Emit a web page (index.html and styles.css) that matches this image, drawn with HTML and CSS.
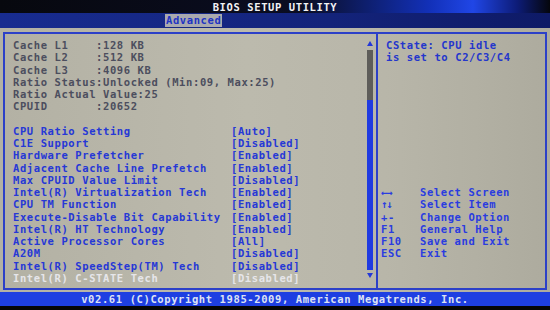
FILE: index.html
```html
<!DOCTYPE html>
<html lang="en">
<head>
  <meta charset="UTF-8">
  <title>BIOS Setup Utility</title>
  <link rel="stylesheet" href="styles.css">
</head>
<body>
  <div class="titlebar">BIOS SETUP UTILITY</div>
  <div class="tabbar"><span class="tab">Advanced</span></div>

  <div class="screen">
    <div class="frame">
      <!-- left: settings list -->
      <div class="left">
        <div class="list">
          <div class="info">Cache L1    :128 KB</div>
          <div class="info">Cache L2    :512 KB</div>
          <div class="info">Cache L3    :4096 KB</div>
          <div class="info">Ratio Status:Unlocked (Min:09, Max:25)</div>
          <div class="info">Ratio Actual Value:25</div>
          <div class="info">CPUID       :20652</div>
          <div class="blank"></div>
          <div class="row"><span>CPU Ratio Setting</span><span>[Auto]</span></div>
          <div class="row"><span>C1E Support</span><span>[Disabled]</span></div>
          <div class="row"><span>Hardware Prefetcher</span><span>[Enabled]</span></div>
          <div class="row"><span>Adjacent Cache Line Prefetch</span><span>[Enabled]</span></div>
          <div class="row"><span>Max CPUID Value Limit</span><span>[Disabled]</span></div>
          <div class="row"><span>Intel(R) Virtualization Tech</span><span>[Enabled]</span></div>
          <div class="row"><span>CPU TM Function</span><span>[Enabled]</span></div>
          <div class="row"><span>Execute-Disable Bit Capability</span><span>[Enabled]</span></div>
          <div class="row"><span>Intel(R) HT Technology</span><span>[Enabled]</span></div>
          <div class="row"><span>Active Processor Cores</span><span>[All]</span></div>
          <div class="row"><span>A20M</span><span>[Disabled]</span></div>
          <div class="row"><span>Intel(R) SpeedStep(TM) Tech</span><span>[Disabled]</span></div>
          <div class="row current"><span>Intel(R) C-STATE Tech</span><span>[Disabled]</span></div>
        </div>
        <div class="scroll">
          <div class="arrow up"></div>
          <div class="track"></div>
          <div class="thumb"></div>
          <div class="arrow down"></div>
        </div>
      </div>

      <!-- right: help + keys -->
      <div class="right">
        <div class="help">CState: CPU idle<br>is set to C2/C3/C4</div>
        <div class="keys">
          <span class="arrows">&larr;&rarr;</span><span>Select Screen</span>
          <span class="arrows">&uarr;&darr;</span><span>Select Item</span>
          <span>+-</span><span>Change Option</span>
          <span>F1</span><span>General Help</span>
          <span>F10</span><span>Save and Exit</span>
          <span>ESC</span><span>Exit</span>
        </div>
      </div>
    </div>
  </div>

  <div class="footer">v02.61 (C)Copyright 1985-2009, American Megatrends, Inc.</div>
</body>
</html>
```

FILE: styles.css
```css
/* ─── base ─── */
* { box-sizing: border-box; margin: 0; padding: 0; }
html, body { width: 550px; height: 310px; overflow: hidden; }
body {
  background: #050608;
  font-family: "DejaVu Sans Mono", "Liberation Mono", monospace;
  font-weight: bold;
  font-size: 10.5px;
  letter-spacing: 0.6px;
  line-height: 12.25px;
}

/* ─── top bars ─── */
.titlebar {
  height: 13px; line-height: 14px;
  text-align: center; color: #f2f2f4;
  background: linear-gradient(90deg, #07080e 0%, #0a0d22 55%, #1230b8 78%, #2046e6 86%, #0d1c78 94%, #05060c 100%);
}
.tabbar {
  height: 15px;
  padding: 1px 0 0 165px;
  background: linear-gradient(90deg, #182c90 0%, #13237a 60%, #0e1a66 100%);
}
.tab {
  display: inline-block;
  height: 13px; line-height: 13px;
  padding: 0 1px;
  background: #a9a9ae; color: #1e34c4;
}

/* ─── main frame ─── */
.screen {
  height: 264px;
  padding: 4px 3px 2px 3px;
  background: linear-gradient(90deg, #b3b1a4 0%, #bcbaad 45%, #b8b6a9 70%, #adab9e 100%);
}
.frame {
  height: 258px;
  display: flex;
  border: 2px solid #2c40c8;
}
.left {
  width: 373px;
  display: flex;
  border-right: 2px solid #2c40c8;
  padding: 5px 3px 0 8px;
}
.list { flex: 1; }
.info { color: #4c4e5e; white-space: pre; height: 12.25px; }
.blank { height: 12.25px; }
.row {
  display: grid; grid-template-columns: 218px auto;
  color: #2638d6; white-space: pre; height: 12.25px;
}
.row.current { color: #e6e6ea; }

/* scrollbar */
.scroll { width: 6px; display: flex; flex-direction: column; align-items: center; }
.arrow { width: 0; height: 0; border-left: 3px solid transparent; border-right: 3px solid transparent; }
.arrow.up { border-bottom: 5px solid #2438d8; margin: 2px 0 4px; }
.arrow.down { border-top: 5px solid #2438d8; margin-top: 3px; }
.track { width: 6px; height: 50px; background: #5e5d5a; }
.thumb { width: 6px; height: 170px; background: #1f3ae0; }

/* help panel */
.right { flex: 1; padding: 5px 0 0 3px; color: #2436cc; }
.help { padding-left: 5px; white-space: pre; }
.keys {
  display: grid; grid-template-columns: 39px auto;
  margin-top: 122.5px;
  color: #2a3ce0;
}
.keys span { height: 12.25px; white-space: pre; }
.arrows { letter-spacing: -1px; }

/* ─── footer ─── */
.footer {
  height: 14px; line-height: 14px;
  text-align: center; color: #dde2f4;
  background: #1e3fe2;
}
```
